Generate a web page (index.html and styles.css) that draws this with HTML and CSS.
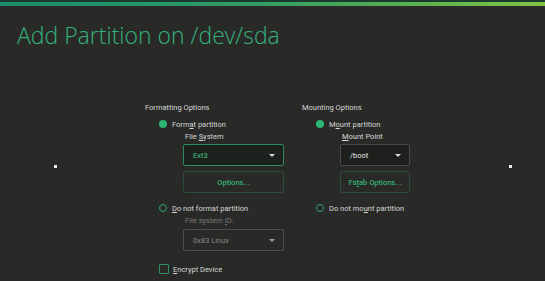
FILE: index.html
```html
<!DOCTYPE html>
<html lang="en">
<head>
    <meta charset="UTF-8">
    <title>Add Partition on /dev/sda</title>
    <link rel="stylesheet" href="styles.css">
</head>
<body>
    <div class="topbar"></div>
    <h1 class="title">Add Partition on /dev/sda</h1>

    <span class="handle handle-left"></span>
    <span class="handle handle-right"></span>

    <div class="form">
        <div class="column column-format">
            <div class="group-title">Formatting Options</div>

            <div class="radio-row">
                <span class="radio checked"></span>
                <span>Form<u>a</u>t partition</span>
            </div>
            <div class="sub">
                <div class="field-label">File <u>S</u>ystem</div>
                <div class="combo focused">
                    <span>Ext3</span>
                    <span class="arrow"></span>
                </div>
                <div class="button">Options...</div>
            </div>

            <div class="radio-row second">
                <span class="radio"></span>
                <span><u>D</u>o not format partition</span>
            </div>
            <div class="sub">
                <div class="field-label disabled">File system <u>I</u>D:</div>
                <div class="combo disabled">
                    <span>0x83 Linux</span>
                    <span class="arrow"></span>
                </div>
            </div>

            <div class="check-row">
                <span class="checkbox"></span>
                <span><u>E</u>ncrypt Device</span>
            </div>
        </div>

        <div class="column column-mount">
            <div class="group-title">Mounting Options</div>

            <div class="radio-row">
                <span class="radio checked"></span>
                <span>M<u>o</u>unt partition</span>
            </div>
            <div class="sub">
                <div class="field-label"><u>M</u>ount Point</div>
                <div class="combo small">
                    <span>/boot</span>
                    <span class="arrow"></span>
                </div>
                <div class="button small">Fs<u>t</u>ab Options...</div>
            </div>

            <div class="radio-row second">
                <span class="radio"></span>
                <span>Do not mo<u>u</u>nt partition</span>
            </div>
        </div>
    </div>
</body>
</html>
```

FILE: styles.css
```css
body {
    margin: 0;
    background-color: #292a28;
    font-family: Roboto, "Liberation Sans", sans-serif;
    font-size: 7.5px;
    color: #d6d6d6;
    height: 281px;
    overflow: hidden;
    position: relative;
}

u {
    text-underline-offset: 1px;
}

.topbar {
    height: 4px;
    border-top: 2px solid #1d3a31;
    background: linear-gradient(to right, #1f8a6c, #2f9c66 45%, #58b050 75%, #82c444);
}

.title {
    margin: 14px 0 0 17px;
    font-family: "Open Sans", sans-serif;
    font-weight: 300;
    font-size: 23px;
    line-height: 30px;
    color: #35b27c;
}

.handle {
    position: absolute;
    top: 165px;
    width: 3px;
    height: 3px;
    background: #f2f2f2;
}

.handle-left {
    left: 54px;
}

.handle-right {
    left: 509px;
}

.form {
    display: flex;
    padding-left: 145px;
    margin-top: 53px;
}

.column-format {
    width: 157px;
}

.group-title {
    height: 10px;
    line-height: 10px;
}

.radio-row,
.check-row {
    display: flex;
    align-items: center;
    height: 10px;
    margin-top: 6px;
    padding-left: 14px;
    gap: 5px;
}

.radio-row.second {
    margin-top: 10px;
}

.radio {
    width: 8px;
    height: 8px;
    border-radius: 50%;
    background: #2cb573;
    box-sizing: border-box;
}

.radio:not(.checked) {
    background: transparent;
    border: 1.5px solid #2fa070;
}

.sub {
    padding-left: 38px;
}

.field-label {
    height: 10px;
    line-height: 10px;
    margin-top: 3px;
    padding-left: 2px;
}

.field-label.disabled {
    color: #777876;
}

.combo {
    display: flex;
    align-items: center;
    justify-content: space-between;
    width: 101px;
    height: 22px;
    margin-top: 2px;
    padding: 0 8px 0 9px;
    box-sizing: border-box;
    border: 1px solid #4a4b49;
    border-radius: 2px;
    background: #1f201e;
    color: #e6e6e6;
}

.combo.focused {
    border-color: #2f8a5f;
    color: #3fc17f;
    background: #1d211e;
}

.combo.disabled {
    background: transparent;
    border-color: #4d4e4c;
    color: #858684;
    margin-top: 3px;
}

.combo.small {
    width: 70px;
}

.arrow {
    width: 0;
    height: 0;
    border-left: 3px solid transparent;
    border-right: 3px solid transparent;
    border-top: 3px solid #d8d8d8;
}

.combo.disabled .arrow {
    border-top-color: #9a9a9a;
}

.button {
    width: 101px;
    height: 22px;
    margin-top: 5px;
    box-sizing: border-box;
    border: 1px solid #2d4a3a;
    border-radius: 2px;
    display: flex;
    align-items: center;
    justify-content: center;
    color: #33b274;
    font-weight: 500;
}

.button.small {
    width: 70px;
}

.check-row {
    margin-top: 13px;
    padding-left: 14px;
    gap: 4px;
}

.checkbox {
    width: 10px;
    height: 10px;
    box-sizing: border-box;
    border: 1.5px solid #2f9068;
    border-radius: 1px;
}
```
